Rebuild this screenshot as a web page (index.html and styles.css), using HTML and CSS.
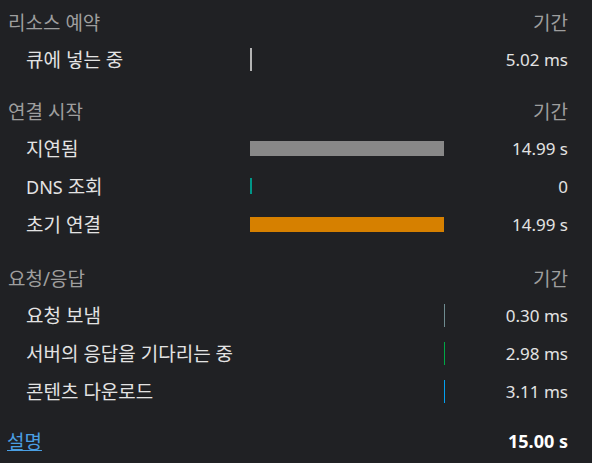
FILE: index.html
```html
<!DOCTYPE html>
<html lang="ko">
<head>
<meta charset="utf-8">
<link rel="stylesheet" href="styles.css">
</head>
<body>
<div class="timing">
  <section class="group">
    <div class="row head"><span class="label">리소스 예약</span><span class="track"></span><span class="value">기간</span></div>
    <div class="row"><span class="label">큐에 넣는 중</span><span class="track"><i class="bar queue"></i></span><span class="value">5.02 ms</span></div>
  </section>
  <section class="group">
    <div class="row head"><span class="label">연결 시작</span><span class="track"></span><span class="value">기간</span></div>
    <div class="row"><span class="label">지연됨</span><span class="track"><i class="bar stalled" style="width:100%"></i></span><span class="value">14.99 s</span></div>
    <div class="row"><span class="label"><span class="latin">DNS</span> 조회</span><span class="track"><i class="bar dns"></i></span><span class="value">0</span></div>
    <div class="row"><span class="label">초기 연결</span><span class="track"><i class="bar connect" style="width:100%"></i></span><span class="value">14.99 s</span></div>
  </section>
  <section class="group">
    <div class="row head"><span class="label">요청/응답</span><span class="track"></span><span class="value">기간</span></div>
    <div class="row"><span class="label">요청 보냄</span><span class="track"><i class="bar tall sending" style="margin-left:100%"></i></span><span class="value">0.30 ms</span></div>
    <div class="row"><span class="label">서버의 응답을 기다리는 중</span><span class="track"><i class="bar tall waiting" style="margin-left:100%"></i></span><span class="value">2.98 ms</span></div>
    <div class="row"><span class="label">콘텐츠 다운로드</span><span class="track"><i class="bar tall receiving" style="margin-left:100%"></i></span><span class="value">3.11 ms</span></div>
  </section>
  <div class="row total"><span class="label"><a href="#" class="link">설명</a></span><span class="track"></span><span class="value">15.00 s</span></div>
</div>
</body>
</html>
```

FILE: styles.css
```css
html, body {
  margin: 0;
  background: #202124;
}
body {
  font-family: "Noto Sans", "Noto Sans CJK KR", sans-serif;
  font-size: 19px;
  color: #e3e3e3;
}
.timing {
  display: flex;
  flex-direction: column;
  padding: 0 24px 0 8px;
}
.group + .group {
  margin-top: 11px;
}
.group + .group + .group {
  margin-top: 13px;
}
.total {
  margin-top: 12px;
}
.row {
  display: grid;
  grid-template-columns: 242px 194px 1fr;
  align-items: center;
  height: 38px;
  box-sizing: border-box;
}
.head {
  height: 40px;
  padding-top: 4px;
  color: #9e9e9e;
}
.label {
  padding-left: 18px;
  white-space: nowrap;
}
.head .label,
.total .label {
  padding-left: 0;
}
.latin {
  font-size: 18px;
}
.value {
  text-align: right;
  font-size: 17px;
  white-space: nowrap;
}
.head .value {
  font-size: 19px;
}
.head .track {
  height: auto;
}
.track {
  display: flex;
  align-items: center;
  height: 100%;
}
.bar {
  display: block;
  flex: none;
}
.queue {
  width: 2px;
  height: 23px;
  background: #b4b4b4;
}
.stalled {
  height: 15px;
  background: #888888;
}
.dns {
  width: 2px;
  height: 16px;
  background: #009688;
}
.connect {
  height: 15px;
  background: #d68000;
}
.tall {
  width: 1px;
  height: 23px;
}
.sending {
  background: #6f8c90;
}
.waiting {
  background: #00a846;
}
.receiving {
  background: #03a0f0;
}
.link {
  color: #4a9fe3;
  text-decoration: underline;
  margin-left: -1px;
}
.total .value {
  font-size: 18px;
  font-weight: 700;
  color: #ffffff;
}
```
